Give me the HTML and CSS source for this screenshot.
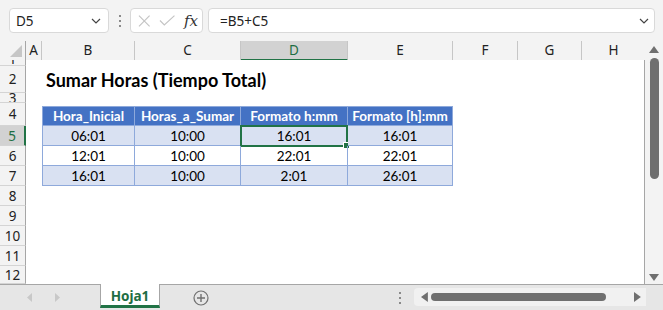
FILE: index.html
```html
<!DOCTYPE html>
<html lang="es">
<head>
<meta charset="utf-8">
<title>Sumar Horas</title>
<link rel="stylesheet" href="styles.css">
</head>
<body>
<div class="app">
  <div class="fbar">
    <div class="namebox">
      <span>D5</span>
      <svg width="10" height="6" viewBox="0 0 10 6"><path d="M1 1 L5 5 L9 1" fill="none" stroke="#444" stroke-width="1.2"/></svg>
    </div>
    <div class="vdots"><i></i><i></i><i></i></div>
    <div class="fxbox">
      <svg width="13" height="12" viewBox="0 0 13 12"><path d="M1 0.5 L12 11.5 M12 0.5 L1 11.5" stroke="#c4c4c4" stroke-width="1.2" fill="none"/></svg>
      <svg width="17" height="11" viewBox="0 0 17 11"><path d="M1 5.5 L5.5 10 L16 0.5" stroke="#c4c4c4" stroke-width="1.2" fill="none"/></svg>
      <span class="fx">fx</span>
    </div>
    <div class="formula">
      <span>=B5+C5</span>
      <svg width="10" height="6" viewBox="0 0 10 6"><path d="M1 1 L5 5 L9 1" fill="none" stroke="#444" stroke-width="1.2"/></svg>
    </div>
  </div>

  <div class="main">
    <div class="sheet">
      <div class="colhead">
        <div class="corner"><svg width="12" height="12" viewBox="0 0 12 12"><path d="M12 0 L12 12 L0 12 Z" fill="#c6c6c6"/></svg></div>
        <div class="ch">A</div>
        <div class="ch">B</div>
        <div class="ch">C</div>
        <div class="ch sel">D</div>
        <div class="ch">E</div>
        <div class="ch">F</div>
        <div class="ch">G</div>
        <div class="ch last">H</div>
      </div>
      <div class="rows">
        <div class="row h1"><div class="rh tiny">1</div></div>
        <div class="row h2">
          <div class="rh">2</div><div></div>
          <div class="title">Sumar Horas (Tiempo Total)</div>
        </div>
        <div class="row h3"><div class="rh small">3</div></div>
        <div class="row h4">
          <div class="rh">4</div><div></div>
          <div class="tc th first">Hora_Inicial</div>
          <div class="tc th">Horas_a_Sumar</div>
          <div class="tc th">Formato h:mm</div>
          <div class="tc th">Formato [h]:mm</div>
        </div>
        <div class="row h20">
          <div class="rh selrow">5</div><div></div>
          <div class="tc band first">06:01</div>
          <div class="tc band">10:00</div>
          <div class="tc band active">16:01</div>
          <div class="tc band">16:01</div>
        </div>
        <div class="row h20">
          <div class="rh">6</div><div></div>
          <div class="tc first">12:01</div>
          <div class="tc">10:00</div>
          <div class="tc">22:01</div>
          <div class="tc">22:01</div>
        </div>
        <div class="row h20">
          <div class="rh">7</div><div></div>
          <div class="tc band first">16:01</div>
          <div class="tc band">10:00</div>
          <div class="tc band">2:01</div>
          <div class="tc band">26:01</div>
        </div>
        <div class="row h20"><div class="rh">8</div></div>
        <div class="row h20"><div class="rh">9</div></div>
        <div class="row h20"><div class="rh">10</div></div>
        <div class="row h20"><div class="rh">11</div></div>
        <div class="row h18"><div class="rh">12</div></div>
      </div>
    </div>
    <div class="vscroll">
      <svg class="varrow" width="10" height="7" viewBox="0 0 10 7"><path d="M5 0 L10 7 L0 7 Z" fill="#6f6f6f"/></svg>
      <div class="vthumb"></div>
      <div class="spacer"></div>
      <svg class="varrow" width="10" height="7" viewBox="0 0 10 7"><path d="M0 0 L10 0 L5 7 Z" fill="#6f6f6f"/></svg>
    </div>
  </div>

  <div class="tabbar">
    <div class="nav">
      <svg width="5" height="9" viewBox="0 0 5 9"><path d="M5 0 L5 9 L0 4.5 Z" fill="#c8c8c8"/></svg>
      <svg width="5" height="9" viewBox="0 0 5 9"><path d="M0 0 L0 9 L5 4.5 Z" fill="#c8c8c8"/></svg>
    </div>
    <div class="tab">Hoja1</div>
    <div class="plus">
      <svg width="16" height="16" viewBox="0 0 16 16"><circle cx="8" cy="8" r="7" fill="none" stroke="#707070" stroke-width="1.2"/><path d="M8 4 V12 M4 8 H12" stroke="#707070" stroke-width="1.4"/></svg>
    </div>
    <div class="hdots"><i></i><i></i><i></i></div>
    <div class="htrack">
      <svg width="7" height="10" viewBox="0 0 7 10"><path d="M7 0 L7 10 L0 5 Z" fill="#6f6f6f"/></svg>
      <div class="hthumb"></div>
      <svg width="7" height="10" viewBox="0 0 7 10"><path d="M0 0 L0 10 L7 5 Z" fill="#6f6f6f"/></svg>
    </div>
  </div>
</div>
</body>
</html>
```

FILE: styles.css
```css
html, body {
  margin: 0;
  padding: 0;
}
body {
  background: #f3f3f3;
  font-family: "Noto Sans", "Open Sans", sans-serif;
  color: #222;
  overflow: hidden;
}
.app {
  width: 663px;
  height: 310px;
  display: flex;
  flex-direction: column;
}

/* formula bar */
.fbar {
  height: 38px;
  box-sizing: border-box;
  padding: 8px 8px 5px 9px;
  display: flex;
}
.namebox, .fxbox, .formula {
  box-sizing: border-box;
  background: #fff;
  border: 1px solid #d9d9d9;
  border-radius: 4px;
  display: flex;
  align-items: center;
}
.namebox {
  width: 100px;
  justify-content: space-between;
  padding: 0 7px 0 6px;
  font-size: 13.5px;
}
.vdots {
  width: 21px;
  display: flex;
  flex-direction: column;
  align-items: center;
  justify-content: center;
  gap: 3px;
}
.vdots i, .hdots i {
  display: block;
  width: 2px;
  height: 2px;
  background: #8a8a8a;
}
.fxbox {
  width: 73px;
  padding: 0 4px 0 7px;
  gap: 8px;
}
.fx {
  font-family: "DejaVu Serif", "Liberation Serif", serif;
  font-style: italic;
  font-size: 15px;
  color: #333;
  margin-left: 1px;
}
.formula {
  flex: 1;
  margin-left: 5px;
  justify-content: space-between;
  padding: 0 5px 0 11px;
  font-size: 13.5px;
}

/* sheet */
.main {
  display: flex;
  height: 246px;
}
.sheet {
  width: 645px;
  display: flex;
  flex-direction: column;
}
.colhead {
  height: 22px;
  box-sizing: border-box;
  padding-top: 3px;
  display: grid;
  grid-template-columns: 26px 16px 93px 106px 107px 105px 65px 64px 63px;
}
.corner {
  box-sizing: border-box;
  border-right: 1px solid #a6a6a6;
  border-bottom: 1px solid #a6a6a6;
  display: flex;
  align-items: flex-end;
  justify-content: flex-end;
  padding: 0 3px 3px 0;
}
.ch {
  box-sizing: border-box;
  border-right: 1px solid #c6c6c6;
  border-bottom: 1px solid #a6a6a6;
  font-size: 13.5px;
  line-height: 18px;
  text-align: center;
  color: #222;
}
.ch.last {
  border-right: 0;
}
.ch.sel {
  background: #d2d2d2;
  color: #1e6e43;
  border-bottom: 2px solid #217346;
}
.rows {
  flex: 1;
  background: #fff;
  border-right: 1px solid #a6a6a6;
  overflow: hidden;
}
.row {
  display: grid;
  grid-template-columns: 26px 16px 93px 106px 107px 105px 65px 64px 62px;
}
.h1 { height: 6px; }
.h2 { height: 27px; }
.h3 { height: 10px; }
.h4 { height: 23px; }
.h20 { height: 20px; }
.h18 { height: 18px; }
.rh {
  box-sizing: border-box;
  background: #f3f3f3;
  border-right: 1px solid #a6a6a6;
  border-bottom: 1px solid #d4d4d4;
  font-size: 13.5px;
  color: #222;
  display: flex;
  align-items: center;
  justify-content: center;
  overflow: hidden;
}
.rh.tiny {
  align-items: flex-end;
  line-height: 12px;
}
.rh.small {
  line-height: 10px;
}
.rh.selrow {
  background: #d2d2d2;
  color: #1e6e43;
  border-right: 2px solid #217346;
}
.title {
  grid-column: span 7;
  align-self: end;
  padding: 0 0 2px 4px;
  font-family: Lato, "Liberation Sans", sans-serif;
  font-weight: 700;
  font-size: 18px;
  line-height: 22px;
  color: #000;
  white-space: nowrap;
}
.tc {
  box-sizing: border-box;
  height: 20px;
  padding-top: 2px;
  line-height: 17px;
  border-right: 1px solid #8ea9db;
  border-bottom: 1px solid #8ea9db;
  font-family: Lato, "Liberation Sans", sans-serif;
  font-size: 13.5px;
  color: #000;
  text-align: center;
  white-space: nowrap;
  position: relative;
}
.tc.first {
  border-left: 1px solid #8ea9db;
}
.th {
  margin-top: 3px;
  background: #4472c4;
  color: #fff;
  font-weight: 700;
  border-top: 1px solid #8ea9db;
  padding-top: 1px;
}
.band {
  background: #d9e1f2;
}
.active::before {
  content: "";
  position: absolute;
  left: -1px;
  top: -1px;
  width: 108px;
  height: 22px;
  box-sizing: border-box;
  border: 2px solid #217346;
}
.active::after {
  content: "";
  position: absolute;
  right: -3px;
  bottom: -4px;
  width: 5px;
  height: 5px;
  background: #217346;
  border: 1px solid #fff;
}

/* vertical scrollbar */
.vscroll {
  width: 18px;
  display: flex;
  flex-direction: column;
  align-items: center;
  padding: 8px 0 3px;
  box-sizing: border-box;
}
.varrow {
  flex: none;
}
.vthumb {
  margin-top: 5px;
  width: 9px;
  height: 121px;
  border-radius: 5px;
  background: #6f6f6f;
}
.spacer {
  flex: 1;
}

/* sheet tabs */
.tabbar {
  height: 26px;
  box-sizing: border-box;
  border-top: 1px solid #a6a6a6;
  background: #e6e6e6;
  display: flex;
  align-items: stretch;
}
.nav {
  width: 100px;
  display: flex;
  align-items: center;
  gap: 23px;
  padding-left: 27px;
  box-sizing: border-box;
}
.tab {
  width: 60px;
  box-sizing: border-box;
  margin: -1px 0 2px;
  background: #fff;
  border-left: 1px solid #a6a6a6;
  border-right: 1px solid #a6a6a6;
  border-bottom: 3px solid #217346;
  color: #1e6e43;
  font-weight: 700;
  font-size: 13.5px;
  text-align: center;
  line-height: 24px;
}
.plus {
  width: 82px;
  display: flex;
  align-items: center;
  padding-left: 33px;
  box-sizing: border-box;
}
.hdots {
  width: 172px;
  box-sizing: border-box;
  padding-left: 157px;
  display: flex;
  flex-direction: column;
  justify-content: center;
  gap: 3px;
}
.htrack {
  width: 232px;
  margin: 3px 0 4px;
  background: #f1f1f1;
  border-radius: 4px 0 0 4px;
  display: flex;
  align-items: center;
  box-sizing: border-box;
  padding: 0 5px 0 7px;
  gap: 3px;
}
.hthumb {
  width: 179px;
  height: 8px;
  border-radius: 4px;
  background: #6f6f6f;
  margin-right: 25px;
}
```
